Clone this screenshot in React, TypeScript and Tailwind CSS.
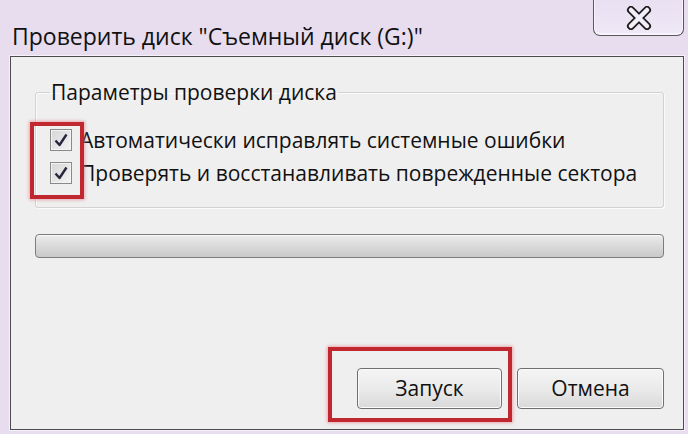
import React from 'react';

const font = { fontFamily: '"Open Sans", "Noto Sans", sans-serif' };

function CheckMark() {
  return (
    <svg width="16" height="16" viewBox="0 0 16 16">
      <path d="M2.5 8.5 L6.5 13 L13.5 2.5" fill="none" stroke="#26263f" strokeWidth="2.4" strokeLinejoin="round" />
    </svg>
  );
}

function Checkbox() {
  return (
    <div className="w-[22px] h-[22px] border border-[#8a8a8a] bg-gradient-to-br from-[#d6d6d6] to-[#f4f4f4] flex items-center justify-center shrink-0 shadow-[inset_0_0_0_1px_#f4f4f4]">
      <CheckMark />
    </div>
  );
}

function CloseGlyph() {
  return (
    <svg width="30" height="24" viewBox="0 0 30 24">
      <path d="M7 4 L23 20 M23 4 L7 20" stroke="#1e1e1e" strokeWidth="8" strokeLinecap="round" />
      <path d="M7 4 L23 20 M23 4 L7 20" stroke="#f4eefa" strokeWidth="4.5" strokeLinecap="round" />
    </svg>
  );
}

function WinButton({ label, w }: { label: string; w: string }) {
  return (
    <button
      className={`${w} h-[41px] rounded-[4px] border border-[#6f6f6f] bg-gradient-to-b from-[#f4f4f4] via-[#ebebeb] to-[#d9d9d9] text-[21px] text-[#111] shadow-[inset_0_0_0_1px_#fbfbfb]`}
      style={font}
    >
      {label}
    </button>
  );
}

export default function App() {
  return (
    <div className="w-[688px] h-[434px] bg-[#e7ddef] overflow-hidden relative" style={font}>
      {/* title bar */}
      <div className="h-[56px] flex justify-between">
        <div className="pl-[12px] pt-[21px] text-[23px] leading-[30px] text-[#111]">
          Проверить диск "Съемный диск (G:)"
        </div>
        <div className="mr-[4px] w-[91px] h-[36px] border border-t-0 border-[#5a5a5a] rounded-b-[7px] bg-gradient-to-b from-[#e9e0f2] to-[#efe8f6] flex items-center justify-center shadow-[inset_0_-1px_0_1px_#f7f2fb]">
          <CloseGlyph />
        </div>
      </div>

      {/* client area */}
      <div className="ml-[10px] w-[674px] h-[374px] border border-[#4c4c4c] bg-[#efefef] shadow-[0_0_0_1px_#f6f1fa] flex flex-col pl-[24px] pr-[19px] pt-[22px] relative">
        <fieldset className="border border-[#d2d2d2] rounded-[3px] h-[129px] shadow-[inset_1px_1px_0_#fbfbfb,1px_1px_0_#fbfbfb] px-[14px]">
          <legend className="ml-0 px-[1px] text-[21px] leading-[26px] text-[#111]">
            Параметры проверки диска
          </legend>
          <div className="flex flex-col gap-[11px] pt-[24px]">
            <div className="flex items-center gap-[8px] text-[21px] leading-[22px] text-[#111]">
              <Checkbox />
              <span>Автоматически исправлять системные ошибки</span>
            </div>
            <div className="flex items-center gap-[8px] text-[21px] leading-[22px] text-[#111]">
              <Checkbox />
              <span>Проверять и восстанавливать поврежденные сектора</span>
            </div>
          </div>
        </fieldset>

        <div className="mt-[26px] h-[24px] rounded-[4px] border border-[#7d7d7d] bg-gradient-to-b from-[#ececec] via-[#dadada] to-[#c9c9c9] shadow-[inset_0_1px_0_#f8f8f8]" />

        <div className="mt-auto mb-[20px] flex justify-end gap-[15px]">
          <WinButton label="Запуск" w="w-[145px]" />
          <WinButton label="Отмена" w="w-[147px]" />
        </div>

        {/* red highlight boxes */}
        <div className="absolute left-[19px] top-[65px] w-[54px] h-[77px] border-[4px] border-[#c1272f] shadow-[0_0_3px_1px_rgba(230,120,130,0.6)]" />
        <div className="absolute left-[317px] top-[290px] w-[184px] h-[75px] border-[4px] border-[#c1272f] shadow-[0_0_3px_1px_rgba(230,120,130,0.6)]" />
      </div>
    </div>
  );
}
